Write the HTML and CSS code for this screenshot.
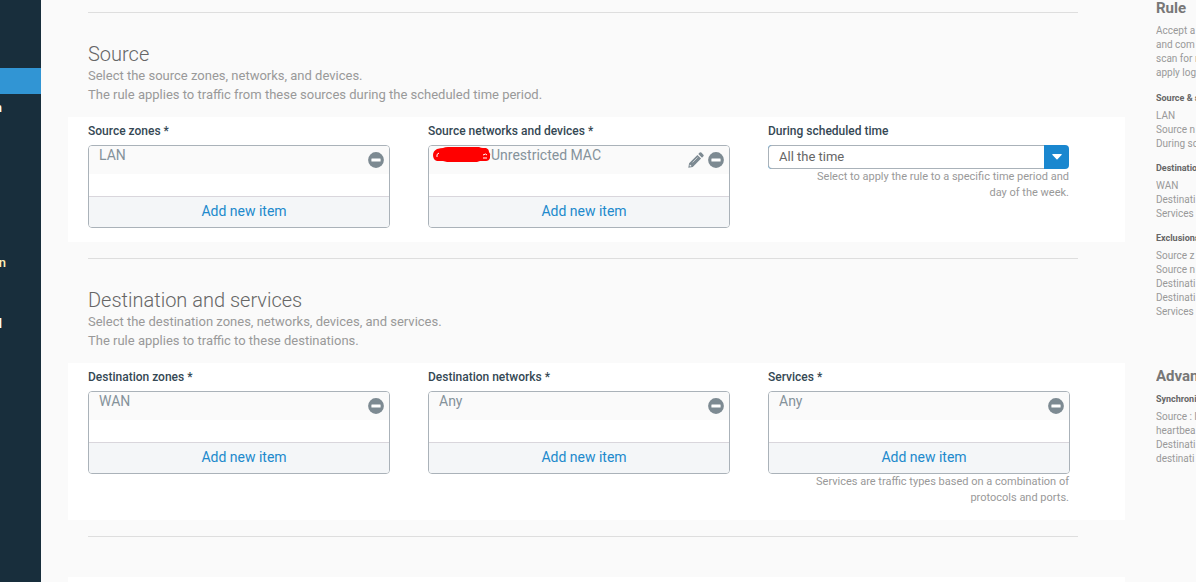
FILE: index.html
```html
<!DOCTYPE html>
<html lang="en">
<head>
<meta charset="utf-8">
<title>Firewall rule</title>
<link rel="stylesheet" href="styles.css">
</head>
<body>
<svg class="defs" aria-hidden="true">
  <symbol id="minus" viewBox="0 0 16 16"><circle cx="8" cy="8" r="7.9" fill="#7d8a92"/><rect x="3.4" y="6.4" width="9.2" height="3.2" rx=".5" fill="#fff"/></symbol>
  <symbol id="pencil" viewBox="0 0 16 16"><path fill="#7d8a92" d="M.3 15.7 1.1 11.2 9.4 2.9 13.1 6.6 4.8 14.9ZM10.3 2 11.7.6Q12.5-.1 13.3.6L15.4 2.7Q16.1 3.5 15.4 4.3L14 5.7Z"/><path d="M4.6 10.4 9.6 5.4" stroke="#fafafa" stroke-width=".6" fill="none"/><path d="M1.9 12.4 3.6 14.1 2 14.4 1.6 14Z" fill="#fafafa"/></symbol>
</svg>
<div class="page">
  <nav class="sidebar" aria-label="Main">
    <a class="nav-item active" href="#" aria-label="Current page"></a>
    <a class="nav-item" href="#"><span class="narrow">n</span></a>
    <a class="nav-item highlight" href="#"><span>n</span></a>
    <a class="nav-item last" href="#"><span class="narrow">l</span></a>
  </nav>
  <main class="content">
    <section class="section">
      <h2>Source</h2>
      <p class="intro">Select the source zones, networks, and devices.<br>The rule applies to traffic from these sources during the scheduled time period.</p>
      <div class="panel">
        <div class="field">
          <h3 class="label">Source zones *</h3>
          <div class="picker">
            <div class="item"><span class="name">LAN</span><button class="icon" aria-label="Remove LAN"><svg><use href="#minus"/></svg></button></div>
            <button class="add">Add new item</button>
          </div>
        </div>
        <div class="field">
          <h3 class="label">Source networks and devices *</h3>
          <div class="picker">
            <div class="item marked">
              <svg class="scribble" viewBox="0 0 58 17" aria-hidden="true"><path d="M4 3Q8 2 10 2Q12 1 15 1H46Q48 2 50 2H53Q56 3 56 6Q58 8 57 10V12Q56 15 53 15H47L44 16H14L10 15H4Q0 14 0 9Q0 5 4 3Z" fill="red"/><path d="M4 11Q3 8 6 7M50 9Q53 7 54 9M50 12H54" fill="none" stroke="#fff"/></svg>
              <span class="name">Unrestricted MAC</span>
              <button class="icon" aria-label="Edit"><svg><use href="#pencil"/></svg></button>
              <button class="icon" aria-label="Remove"><svg><use href="#minus"/></svg></button>
            </div>
            <button class="add">Add new item</button>
          </div>
        </div>
        <div class="field">
          <label class="label" for="schedule">During scheduled time</label>
          <div class="select">
            <select id="schedule"><option>All the time</option></select>
            <span class="arrow"><svg viewBox="0 0 10 6"><path d="M.5 0H9.5Q10 .5 9.5 1L5.5 5.2Q5 5.7 4.5 5.2L.5 1Q0 .5.5 0Z" fill="#fff"/></svg></span>
          </div>
          <p class="help">Select to apply the rule to a specific time period and<br>day of the week.</p>
        </div>
      </div>
    </section>
    <section class="section">
      <h2>Destination and services</h2>
      <p class="intro">Select the destination zones, networks, devices, and services.<br>The rule applies to traffic to these destinations.</p>
      <div class="panel">
        <div class="field">
          <h3 class="label">Destination zones *</h3>
          <div class="picker">
            <div class="item"><span class="name">WAN</span><button class="icon" aria-label="Remove WAN"><svg><use href="#minus"/></svg></button></div>
            <button class="add">Add new item</button>
          </div>
        </div>
        <div class="field">
          <h3 class="label">Destination networks *</h3>
          <div class="picker">
            <div class="item"><span class="name">Any</span><button class="icon" aria-label="Remove Any"><svg><use href="#minus"/></svg></button></div>
            <button class="add">Add new item</button>
          </div>
        </div>
        <div class="field">
          <h3 class="label">Services *</h3>
          <div class="picker">
            <div class="item"><span class="name">Any</span><button class="icon" aria-label="Remove Any"><svg><use href="#minus"/></svg></button></div>
            <button class="add">Add new item</button>
          </div>
          <p class="help">Services are traffic types based on a combination of<br>protocols and ports.</p>
        </div>
      </div>
    </section>
    <section class="section">
      <div class="panel next"></div>
    </section>
  </main>
  <aside class="summary">
    <h2>Rule</h2>
    <p class="first">Accept a<br>and com<br>scan for r<br>apply log</p>
    <h3>Source &amp; s</h3>
    <p>LAN<br>Source n<br>During sc</p>
    <h3>Destinatio</h3>
    <p>WAN<br>Destinati<br>Services</p>
    <h3>Exclusions</h3>
    <p>Source z<br>Source n<br>Destinati<br>Destinati<br>Services</p>
    <h2 class="advanced">Advan</h2>
    <h3>Synchroni</h3>
    <p>Source : I<br>heartbea<br>Destinati<br>destinati</p>
  </aside>
</div>
</body>
</html>
```
FILE: styles.css
```css
* { box-sizing: border-box; }
html, body { height: 100%; }
body { margin: 0; background: #fafafa; color: #999; font-family: Roboto, "Liberation Sans", sans-serif; }
h2, h3, p { margin: 0; }
button { border: 0; padding: 0; background: none; font: inherit; cursor: pointer; }
svg { display: block; }
.defs { position: absolute; width: 0; height: 0; }

.page { display: grid; grid-template-columns: 41px 1fr 40px; min-height: 100%; }

.sidebar { padding-top: 68px; background: #182e3c; }
.nav-item { display: flex; align-items: center; height: 26px; color: #fff; font-size: 13px; font-weight: 500; text-decoration: none; }
.nav-item.active { background: #3195d4; }
.nav-item.highlight { margin-top: 129px; color: #fff0b8; }
.nav-item.last { margin-top: 35px; }
.nav-item span { display: flex; justify-content: flex-end; width: 6px; overflow: hidden; }
.nav-item .narrow { width: 2px; }

.content { min-width: 0; padding: 12px 31px 0 27px; }
.section { position: relative; padding-top: 30px; }
.section::before { content: ""; position: absolute; top: 0; left: 20px; right: 47px; height: 1px; background: #dedede; }
.section h2 { padding-left: 20px; color: #666; font-size: 20px; font-weight: 300; line-height: 24px; }
.intro { padding-left: 20px; font-size: 13px; line-height: 19px; }

.panel { display: grid; grid-template-columns: repeat(3, 1fr); gap: 38px; margin: 13px 0 16px; padding: 5px 55px 14px 20px; background: #fff; }
.panel.next { margin: 11px 0 0; padding: 5px 0 0; }
.label { display: block; margin-bottom: 5px; color: #354854; font-size: 12px; font-weight: 500; line-height: 18px; }
.picker { overflow: hidden; border: 1px solid #aab2b9; border-radius: 4px; }
.item { display: flex; align-items: center; gap: 4px; height: 28px; margin-bottom: 22px; padding: 0 5px 0 10px; background: #fafafa; }
.item.marked { padding-left: 4px; }
.marked .name { margin-left: -4px; }
.name { flex: 1; align-self: flex-start; color: #85929a; font-size: 14px; line-height: 18px; }
.icon, .icon svg { width: 16px; height: 16px; }
.scribble { align-self: flex-start; width: 58px; height: 17px; }
.add { display: block; width: 100%; height: 31px; padding: 0 0 2px 10px; border-top: 1px solid #d9d6dc; background: #f4f6f8; color: #2189cc; font-size: 14px; line-height: 28px; }

.select { display: flex; height: 24px; margin-right: 1px; overflow: hidden; border-radius: 4px; background: #1a87cf; }
.select select { flex: 1; appearance: none; padding: 0 10px 2px; border: 1px solid #aab2b9; border-right: 0; border-radius: 4px 0 0 4px; background: #fff; color: #666; font: 13px Roboto, sans-serif; }
.arrow { display: grid; place-items: center; width: 25px; }
.arrow svg { width: 10px; height: 6px; }
.help { padding-right: 1px; font-size: 11px; line-height: 16px; text-align: right; }

.summary { overflow: hidden; white-space: nowrap; }
.summary h2 { color: #777; font-size: 15px; font-weight: 700; line-height: 16px; }
.summary h3 { margin: 10px 0 4px; color: #666; font-size: 9px; font-weight: 700; line-height: 14px; }
.summary p { font-size: 10px; line-height: 14px; }
.summary .first { margin: 8px 0 11px; }
.summary .advanced { margin-top: 49px; }
.summary .advanced + h3 { margin-top: 8px; }
```
